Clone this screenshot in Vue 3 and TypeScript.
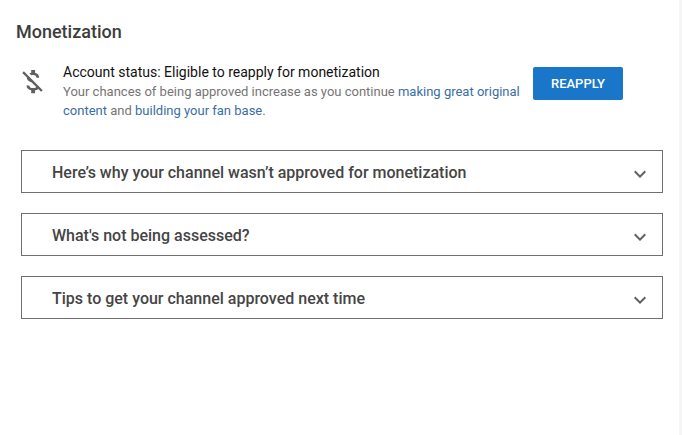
<script setup lang="ts">
const sections: string[] = [
  'Here’s why your channel wasn’t approved for monetization',
  "What's not being assessed?",
  'Tips to get your channel approved next time',
]
</script>

<template>
  <div class="page">
    <h2 class="title">Monetization</h2>

    <div class="status">
      <svg class="status-icon" width="31" height="31" viewBox="0 0 24 24" fill="#606060">
        <path d="M12.5 6.9c1.78 0 2.44.85 2.5 2.1h2.21c-.07-1.72-1.12-3.3-3.21-3.81V3h-3v2.16c-.53.12-1.03.3-1.48.54l1.47 1.47c.41-.17.91-.27 1.51-.27zM5.33 4.06L4.06 5.33 7.5 8.77c0 2.08 1.56 3.21 3.91 3.91l3.51 3.51c-.34.48-1.05.91-2.42.91-2.06 0-2.87-.92-2.98-2.1h-2.2c.12 2.19 1.76 3.42 3.68 3.83V21h3v-2.15c.96-.18 1.82-.55 2.45-1.12l2.22 2.22 1.27-1.27L5.33 4.06z" />
      </svg>
      <div class="status-text">
        <div class="status-line">Account status: Eligible to reapply for monetization</div>
        <div class="status-desc">
          Your chances of being approved increase as you continue
          <a class="link">making great original content</a>
          and
          <a class="link">building your fan base</a>.
        </div>
      </div>
      <button class="reapply">REAPPLY</button>
    </div>

    <div class="sections">
      <div v-for="item in sections" :key="item" class="section">
        <span class="section-label">{{ item }}</span>
        <svg class="chevron" width="24" height="24" viewBox="0 0 24 24" fill="#606060">
          <path d="M16.59 8.59L12 13.17 7.41 8.59 6 10l6 6 6-6z" />
        </svg>
      </div>
    </div>
  </div>
</template>

<style scoped>
.page {
  box-sizing: border-box;
  width: 682px;
  height: 435px;
  padding: 22px 0 0 16px;
  overflow: hidden;
  background: #fff;
  border-right: 3px solid #f5f5f5;
  font-family: Roboto, "Liberation Sans", sans-serif;
}

.title {
  margin: 0;
  font-size: 18px;
  line-height: 20px;
  font-weight: 500;
  color: #3d3d3d;
}

.status {
  display: flex;
  align-items: flex-start;
  margin: 20px 0 0 1px;
}

.status-icon {
  flex: none;
  margin-top: 4px;
}

.status-text {
  flex: none;
  width: 462px;
  margin-left: 15px;
}

.status-line {
  font-size: 14px;
  line-height: 20px;
  color: #111;
}

.status-desc {
  font-size: 13px;
  line-height: 19px;
  color: #757575;
}

.link {
  color: #3a6ea5;
}

.reapply {
  flex: none;
  width: 90px;
  height: 33px;
  margin: 5px 0 0 8px;
  padding: 0;
  border: 0;
  border-radius: 2px;
  background: #1976c9;
  color: #fff;
  font-family: inherit;
  font-size: 13px;
  font-weight: 500;
}

.sections {
  display: flex;
  flex-direction: column;
  gap: 20px;
  width: 642px;
  margin: 30px 0 0 5px;
}

.section {
  box-sizing: border-box;
  display: flex;
  align-items: center;
  justify-content: space-between;
  height: 43px;
  padding: 0 10px 0 30px;
  border: 1px solid #6f6f6f;
  font-size: 16px;
  font-weight: 500;
  color: #454545;
}

.section-label {
  margin-top: 2px;
}

.chevron {
  margin-top: 5px;
}
</style>
